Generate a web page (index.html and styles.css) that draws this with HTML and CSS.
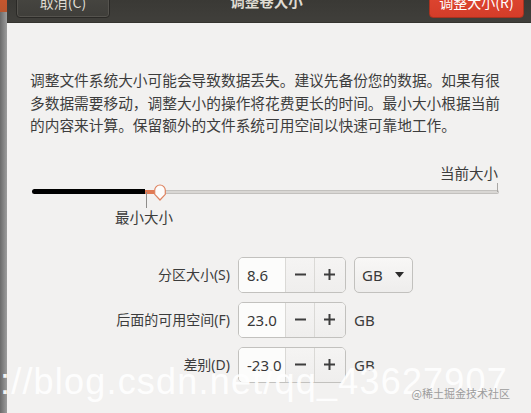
FILE: index.html
```html
<!DOCTYPE html>
<html lang="zh-CN">
<head>
<meta charset="utf-8">
<title>调整卷大小</title>
<link rel="stylesheet" href="styles.css">
</head>
<body>
<div class="screen">
  <div class="side"></div>
  <div class="dialog">
    <header class="bar">
      <button class="btn btn-cancel">取消(C)</button>
      <div class="title">调整卷大小</div>
      <button class="btn btn-ok">调整大小(R)</button>
    </header>
    <main class="content">
      <p class="desc">调整文件系统大小可能会导致数据丢失。建议先备份您的数据。如果有很<br>多数据需要移动，调整大小的操作将花费更长的时间。最小大小根据当前<br>的内容来计算。保留额外的文件系统可用空间以快速可靠地工作。</p>
      <div class="slider">
        <div class="slider-top"><span>当前大小</span></div>
        <div class="track">
          <div class="rail-fill" style="width:113px"></div>
          <div class="rail-min" style="width:12px"></div>
          <div class="rail-rest"></div>
          <div class="mark mark-cur"></div>
          <div class="mark mark-min" style="left:114px"></div>
          <svg class="handle" style="left:122px" width="12" height="17" viewBox="0 0 12 17">
            <path d="M0.7 6.3 A5.3 5.3 0 0 1 11.3 6.3 L11.3 10.3 L6 16 L0.7 10.3 Z" fill="#fdfcfb" stroke="#de8360" stroke-width="1.2"/>
          </svg>
        </div>
        <div class="slider-bottom"><span class="min-label" style="margin-left:83px">最小大小</span></div>
      </div>
      <div class="form">
        <label class="lbl">分区大小(S)</label>
        <div class="spin">
          <div class="spin-entry">8.6</div>
          <div class="spin-btn"><svg width="11" height="11" viewBox="0 0 11 11"><rect x="0" y="4.5" width="11" height="2" fill="#3d3d3d"/></svg></div>
          <div class="spin-btn spin-plus"><svg width="11" height="11" viewBox="0 0 11 11"><rect x="0" y="4.5" width="11" height="2" fill="#3d3d3d"/><rect x="4.5" y="0" width="2" height="11" fill="#3d3d3d"/></svg></div>
        </div>
        <div class="combo"><span>GB</span><svg width="9" height="6" viewBox="0 0 9 6"><path d="M0 0 H9 L4.5 5.5 Z" fill="#2c2c2c"/></svg></div>

        <label class="lbl">后面的可用空间(F)</label>
        <div class="spin">
          <div class="spin-entry">23.0</div>
          <div class="spin-btn"><svg width="11" height="11" viewBox="0 0 11 11"><rect x="0" y="4.5" width="11" height="2" fill="#3d3d3d"/></svg></div>
          <div class="spin-btn spin-plus"><svg width="11" height="11" viewBox="0 0 11 11"><rect x="0" y="4.5" width="11" height="2" fill="#3d3d3d"/><rect x="4.5" y="0" width="2" height="11" fill="#3d3d3d"/></svg></div>
        </div>
        <div class="unit">GB</div>

        <label class="lbl">差别(D)</label>
        <div class="spin">
          <div class="spin-entry">-23.0</div>
          <div class="spin-btn"><svg width="11" height="11" viewBox="0 0 11 11"><rect x="0" y="4.5" width="11" height="2" fill="#3d3d3d"/></svg></div>
          <div class="spin-btn spin-plus"><svg width="11" height="11" viewBox="0 0 11 11"><rect x="0" y="4.5" width="11" height="2" fill="#3d3d3d"/><rect x="4.5" y="0" width="2" height="11" fill="#3d3d3d"/></svg></div>
        </div>
        <div class="unit">GB</div>
      </div>
    </main>
  </div>
</div>
<div class="wm">://blog.csdn.net/qq_43627907</div>
<div class="wm2">@稀土掘金技术社区</div>
</body>
</html>
```
FILE: styles.css
```css
html, body {
  margin: 0;
  padding: 0;
  width: 531px;
  height: 413px;
  overflow: hidden;
}
body {
  position: relative;
  font-family: "Noto Sans", "Noto Sans CJK SC", sans-serif;
  color: #3c3c3c;
  background: #f2f1f0;
}
.screen {
  display: flex;
  height: 413px;
}
.side {
  width: 7px;
  flex: none;
  background:
    linear-gradient(to bottom, #c5562e 0, #b9562f 12px, transparent 12px),
    linear-gradient(to right, #6a6a6a, #9d9d9d);
}
.dialog {
  flex: 1;
  display: flex;
  flex-direction: column;
  background: #f2f1f0;
}
.bar {
  height: 23px;
  box-sizing: border-box;
  background: linear-gradient(to bottom, #3a3935, #403f3b);
  display: flex;
  align-items: flex-end;
  justify-content: space-between;
  padding: 0 7px 4px 9px;
  overflow: hidden;
  border-bottom: 1px solid #35342f;
}
.btn {
  height: 32px;
  flex: none;
  border-radius: 4px;
  font-family: "Noto Sans CJK SC", sans-serif;
  font-size: 14px;
  line-height: 30px;
  padding: 0;
  text-align: center;
}
.btn-cancel {
  width: 94px;
  background: linear-gradient(to bottom, #4a4944, #3f3e3a);
  border: 1px solid #2a2926;
  box-shadow: inset 0 0 0 1px #55534e;
  color: #dfdbd2;
}
.btn-ok {
  width: 95px;
  background: linear-gradient(to bottom, #e24a33, #d43c29);
  border: 1px solid #a8321f;
  color: #ffffff;
}
.title {
  height: 32px;
  line-height: 30px;
  font-family: "Noto Sans CJK SC", sans-serif;
  font-size: 14.5px;
  font-weight: 700;
  color: #dfdbd2;
  margin-right: 6px;
}
.content {
  flex: 1;
  padding-top: 46px;
}
.desc {
  margin: 0 0 0 23px;
  white-space: nowrap;
  font-family: "Noto Sans CJK SC", sans-serif;
  font-size: 14.7px;
  line-height: 22.5px;
  color: #3d3d3d;
}
.slider {
  margin: 26px 0 0 25px;
  width: 467px;
  font-family: "Noto Sans CJK SC", sans-serif;
  font-size: 14.5px;
  color: #3c3c3c;
}
.slider-top {
  height: 20px;
  line-height: 20px;
  text-align: right;
  padding-right: 1px;
}
.track {
  position: relative;
  height: 18px;
  display: flex;
  align-items: center;
}
.rail-fill {
  height: 5px;
  background: #000;
  border-radius: 3px 0 0 3px;
  flex: none;
}
.rail-min {
  height: 4px;
  background: #e07b55;
  flex: none;
}
.rail-rest {
  flex: 1;
  height: 2px;
  background: #d9d7d4;
  border: 1px solid #c3c1be;
  border-left: none;
  border-radius: 0 2px 2px 0;
}
.mark {
  position: absolute;
  width: 1px;
  background: #a9a7a4;
}
.mark-cur {
  right: 1px;
  top: 0;
  height: 9px;
}
.mark-min {
  top: 9px;
  height: 16px;
  background: #8f8d8a;
}
.handle {
  position: absolute;
  top: 1px;
}
.slider-bottom {
  margin-top: 6px;
  height: 20px;
  line-height: 20px;
}
.form {
  margin-top: 30px;
  display: grid;
  grid-template-columns: 223px 108px auto;
  grid-auto-rows: 36px;
  column-gap: 8px;
  row-gap: 9px;
  align-items: center;
}
.lbl {
  text-align: right;
  font-family: "Noto Sans", "Noto Sans CJK SC", sans-serif;
  font-size: 14px;
  color: #3c3c3c;
  line-height: 20px;
}
.spin {
  height: 36px;
  box-sizing: border-box;
  border: 1px solid #c2c1be;
  border-radius: 5px;
  display: flex;
  overflow: hidden;
  background: #f3f2f1;
}
.spin-entry {
  width: 46px;
  flex: none;
  box-sizing: border-box;
  padding-left: 8px;
  background: #fcfcfb;
  font-size: 15px;
  line-height: 34px;
  color: #383838;
}
.spin-btn {
  width: 29px;
  flex: none;
  box-sizing: border-box;
  border-left: 1px solid #dad9d6;
  display: flex;
  align-items: center;
  justify-content: center;
  background: linear-gradient(to bottom, #f5f4f3, #efeeed);
}
.spin-plus {
  flex: 1;
  padding-right: 2px;
}
.combo {
  width: 59px;
  height: 36px;
  box-sizing: border-box;
  border: 1px solid #c2c1be;
  border-radius: 5px;
  background: linear-gradient(to bottom, #f8f7f6, #eeedec);
  display: flex;
  align-items: center;
  justify-content: space-between;
  padding: 0 8px 0 7px;
  font-size: 15px;
  color: #383838;
}
.unit {
  font-size: 15px;
  color: #3c3c3c;
}
.wm {
  position: absolute;
  left: 0;
  top: 364px;
  font-family: "Liberation Sans", sans-serif;
  font-size: 36px;
  line-height: 36px;
  letter-spacing: 1.2px;
  color: rgba(255, 255, 255, 0.92);
  white-space: nowrap;
}
.wm2 {
  position: absolute;
  right: 21px;
  top: 386px;
  font-family: "Noto Sans CJK SC", sans-serif;
  font-size: 11px;
  line-height: 14px;
  color: #9c9c9c;
}
```
